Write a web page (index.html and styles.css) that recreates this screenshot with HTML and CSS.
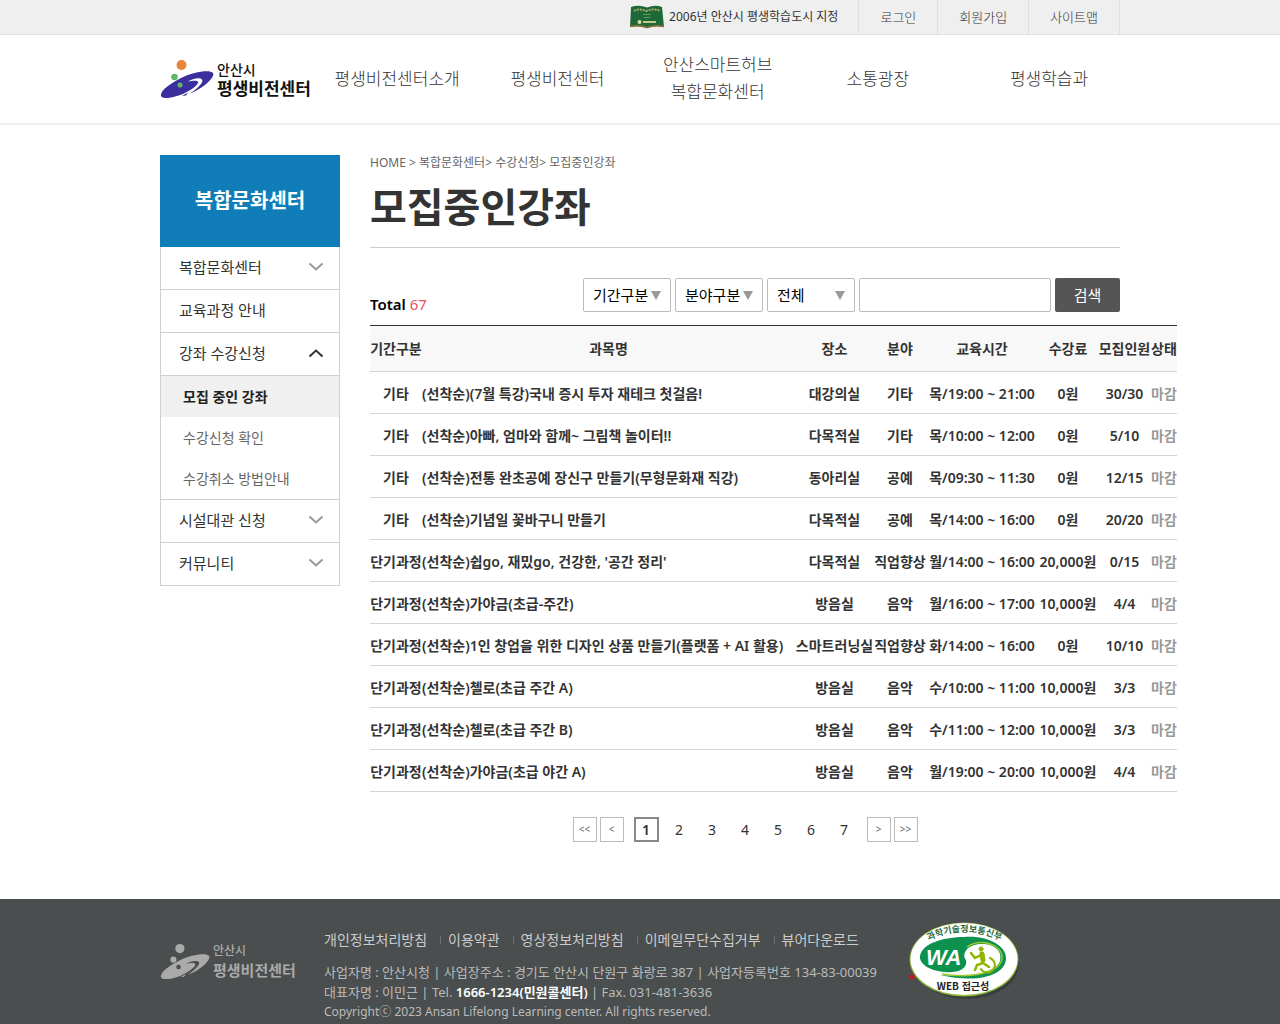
FILE: index.html
```html
<!DOCTYPE html>
<html lang="ko">
<head>
<meta charset="utf-8">
<meta name="viewport" content="width=device-width, initial-scale=1">
<title>모집중인강좌 - 안산시 평생비전센터</title>
<link rel="stylesheet" href="styles.css">
</head>
<body>
<svg width="0" height="0" class="defs" aria-hidden="true">
  <symbol id="mark" viewBox="0 0 54 40">
    <circle class="sun" cx="21.500" cy="6" r="5"/>
    <circle class="leaf" cx="14.500" cy="18" r="3.300"/>
    <path class="wing" d="M1 37C0 32 9 25 21 19 34 12.500 50 10.500 53 14 55.500 18 44 29 30 34.500 38 29 44 23 42 20.500 39.500 18 32 20 28 22.500 35 21 39 21.500 38 24 36 28 29 32 23 35 14 38.500 3 41 1 37Z"/>
    <path class="wing" d="M22 37 28 33.500 26 36.500Z"/>
    <circle class="seed" cx="20" cy="26" r="2.500"/>
  </symbol>
  <symbol id="down" viewBox="0 0 16 10"><path d="M1.500 1.500 8 7.500 14.500 1.500" fill="none" stroke="currentColor" stroke-width="2"/></symbol>
</svg>

<div class="topbar">
  <div class="wrap topbar-in">
    <p class="city">
      <svg width="36" height="24" viewBox="0 0 36 24" aria-hidden="true">
        <path d="M2 2Q10-.5 18 2.500 26-.5 33 2L35 22Q26 20 18 23 10 20 1 22Z" fill="#1d6a38"/>
        <path d="M1 21.500Q10 19.500 18 22.500 26 19.500 35 21.500" fill="none" stroke="#8d6d38" stroke-width="1.500"/>
        <path d="M5 6Q10 3 17 6 25 3 31 6" fill="none" stroke="#b5a765" stroke-width="2" stroke-dasharray="2 1"/>
        <path d="M14 9.500h8M15 12.500h6" stroke="#5d9b54"/>
        <circle cx="10.500" cy="17" r="2" fill="#e8d6a0"/><path d="M14 17h13" stroke="#c8c890" stroke-width="2"/>
      </svg>
      2006년 안산시 평생학습도시 지정
    </p>
    <ul class="util">
      <li><a href="#">로그인</a></li>
      <li><a href="#">회원가입</a></li>
      <li><a href="#">사이트맵</a></li>
    </ul>
  </div>
</div>

<header class="header">
  <div class="wrap header-in">
    <a class="logo" href="#">
      <svg width="54" height="40" aria-hidden="true"><use href="#mark"/></svg>
      <span class="logo-text"><span>안산시</span><strong>평생비전센터</strong></span>
    </a>
    <nav class="gnb">
      <a href="#">평생비전센터소개</a>
      <a href="#">평생비전센터</a>
      <a href="#">안산스마트허브<br>복합문화센터</a>
      <a href="#">소통광장</a>
      <a href="#">평생학습과</a>
    </nav>
  </div>
</header>

<div class="wrap page">
  <aside class="side">
    <h2>복합문화센터</h2>
    <ul class="lnb">
      <li><a href="#">복합문화센터<svg class="chev" width="16" height="10"><use href="#down"/></svg></a></li>
      <li><a href="#">교육과정 안내</a></li>
      <li><a href="#">강좌 수강신청<svg class="chev open" width="16" height="10"><use href="#down"/></svg></a></li>
      <li>
        <ul class="sub">
          <li><a class="on" href="#">모집 중인 강좌</a></li>
          <li><a href="#">수강신청 확인</a></li>
          <li><a href="#">수강취소 방법안내</a></li>
        </ul>
      </li>
      <li><a href="#">시설대관 신청<svg class="chev" width="16" height="10"><use href="#down"/></svg></a></li>
      <li><a href="#">커뮤니티<svg class="chev" width="16" height="10"><use href="#down"/></svg></a></li>
    </ul>
  </aside>

  <main class="main">
    <p class="crumb">HOME &gt; 복합문화센터&gt; 수강신청&gt; 모집중인강좌</p>
    <h1>모집중인강좌</h1>

    <div class="tools">
      <p class="total">Total <span>67</span></p>
      <form class="search">
        <span class="pick"><select aria-label="기간구분"><option>기간구분</option></select></span>
        <span class="pick"><select aria-label="분야구분"><option>분야구분</option></select></span>
        <span class="pick"><select aria-label="검색조건"><option>전체</option></select></span>
        <input type="text" aria-label="검색어">
        <button type="button">검색</button>
      </form>
    </div>

    <table class="list">
      <colgroup><col class="c-term"><col class="c-name"><col class="c-room"><col class="c-kind"><col class="c-time"><col class="c-fee"><col class="c-seat"><col class="c-state"></colgroup>
      <thead>
        <tr><th>기간구분</th><th>과목명</th><th>장소</th><th>분야</th><th>교육시간</th><th>수강료</th><th>모집인원</th><th>상태</th></tr>
      </thead>
      <tbody>
        <tr><td>기타</td><td><a href="#">(선착순)(7월 특강)국내 증시 투자 재테크 첫걸음!</a></td><td>대강의실</td><td>기타</td><td>목/19:00 ~ 21:00</td><td>0원</td><td>30/30</td><td>마감</td></tr>
        <tr><td>기타</td><td><a href="#">(선착순)아빠, 엄마와 함께~ 그림책 놀이터!!</a></td><td>다목적실</td><td>기타</td><td>목/10:00 ~ 12:00</td><td>0원</td><td>5/10</td><td>마감</td></tr>
        <tr><td>기타</td><td><a href="#">(선착순)전통 완초공예 장신구 만들기(무형문화재 직강)</a></td><td>동아리실</td><td>공예</td><td>목/09:30 ~ 11:30</td><td>0원</td><td>12/15</td><td>마감</td></tr>
        <tr><td>기타</td><td><a href="#">(선착순)기념일 꽃바구니 만들기</a></td><td>다목적실</td><td>공예</td><td>목/14:00 ~ 16:00</td><td>0원</td><td>20/20</td><td>마감</td></tr>
        <tr><td>단기과정</td><td><a href="#">(선착순)쉽go, 재밌go, 건강한, '공간 정리'</a></td><td>다목적실</td><td>직업향상</td><td>월/14:00 ~ 16:00</td><td>20,000원</td><td>0/15</td><td>마감</td></tr>
        <tr><td>단기과정</td><td><a href="#">(선착순)가야금(초급-주간)</a></td><td>방음실</td><td>음악</td><td>월/16:00 ~ 17:00</td><td>10,000원</td><td>4/4</td><td>마감</td></tr>
        <tr><td>단기과정</td><td><a href="#">(선착순)1인 창업을 위한 디자인 상품 만들기(플랫폼 + AI 활용)</a></td><td>스마트러닝실</td><td>직업향상</td><td>화/14:00 ~ 16:00</td><td>0원</td><td>10/10</td><td>마감</td></tr>
        <tr><td>단기과정</td><td><a href="#">(선착순)첼로(초급 주간 A)</a></td><td>방음실</td><td>음악</td><td>수/10:00 ~ 11:00</td><td>10,000원</td><td>3/3</td><td>마감</td></tr>
        <tr><td>단기과정</td><td><a href="#">(선착순)첼로(초급 주간 B)</a></td><td>방음실</td><td>음악</td><td>수/11:00 ~ 12:00</td><td>10,000원</td><td>3/3</td><td>마감</td></tr>
        <tr><td>단기과정</td><td><a href="#">(선착순)가야금(초급 야간 A)</a></td><td>방음실</td><td>음악</td><td>월/19:00 ~ 20:00</td><td>10,000원</td><td>4/4</td><td>마감</td></tr>
      </tbody>
    </table>

    <nav class="paging" aria-label="페이지">
      <div class="jump"><a href="#">&lt;&lt;</a><a href="#">&lt;</a></div>
      <div class="nums"><a class="on" href="#">1</a><a href="#">2</a><a href="#">3</a><a href="#">4</a><a href="#">5</a><a href="#">6</a><a href="#">7</a></div>
      <div class="jump"><a href="#">&gt;</a><a href="#">&gt;&gt;</a></div>
    </nav>
  </main>
</div>

<footer class="footer">
  <div class="wrap footer-in">
    <div class="logo logo-gray">
      <svg width="50" height="37" aria-hidden="true"><use href="#mark"/></svg>
      <span class="logo-text"><span>안산시</span><strong>평생비전센터</strong></span>
    </div>
    <div class="info">
      <ul class="policy">
        <li><a href="#">개인정보처리방침</a></li>
        <li><a href="#">이용약관</a></li>
        <li><a href="#">영상정보처리방침</a></li>
        <li><a href="#">이메일무단수집거부</a></li>
        <li><a href="#">뷰어다운로드</a></li>
      </ul>
      <address>
        사업자명 : 안산시청 | 사업장주소 : 경기도 안산시 단원구 화랑로 387 | 사업자등록번호 134-83-00039<br>
        대표자명 : 이민근 | Tel. <strong>1666-1234(민원콜센터)</strong> | Fax. 031-481-3636
      </address>
      <p class="copy">Copyrightⓒ 2023 Ansan Lifelong Learning center. All rights reserved.</p>
    </div>
    <svg class="wa" width="120" height="84" viewBox="0 0 120 84" role="img" aria-label="웹 접근성 인증마크">
      <defs><path id="arc" d="M14 22Q56-2 99 22"/></defs>
      <ellipse cx="59" cy="42" rx="52" ry="35" fill="#2d3132" opacity=".6"/>
      <ellipse cx="56" cy="37.500" rx="54.500" ry="37" fill="#8cb53c"/>
      <ellipse cx="56" cy="37" rx="53.500" ry="36" fill="#fff"/>
      <path d="M56 15C80 13 99 24 98 37 97 53 71 62 32 53 64 56 88 50 92 39 95 27 84 21 71 22 57 24 54 33 58 38 60 48 48 51 37 50 22 49 11 42 12 34 14 21 37 15 56 15Z" fill="#0c914f"/>
      <path d="M59 25C72 16 94 22 94 35 94 50 66 57 34 52" fill="none" stroke="#a1c829" stroke-width="1.500"/>
      <text x="18" y="43" class="wa-big">WA</text>
      <g fill="none" stroke="#8db600" stroke-linecap="round"><circle cx="73" cy="27" r="2" fill="#8db600"/><path d="M74 32 75 38" stroke-width="5"/><path d="M73 33 67 36 63 31M75 41 69 43 67 48M75 41 81 45" stroke-width="2.500"/><path d="M82 36A7.500 7.500 0 1 1 73 47" stroke-width="2"/></g>
      <text class="wa-arc"><textPath href="#arc" startOffset="50%">과학기술정보통신부</textPath></text>
      <text x="55" y="68" class="wa-web">WEB 접근성</text>
      <circle cx="4" cy="55" r="2.500" fill="#c8141e"/>
    </svg>
  </div>
</footer>
</body>
</html>
```
FILE: styles.css
```css
* { box-sizing: border-box; margin: 0; padding: 0; }
body {
  display: flex;
  flex-direction: column;
  min-height: 100vh;
  background: #fff;
  color: #333;
  font: 14px/20px "Noto Sans", "Noto Sans CJK KR", sans-serif;
}
a { color: inherit; text-decoration: none; }
ul { list-style: none; }
.defs { position: absolute; }
.wrap { width: 100%; max-width: 960px; margin: 0 auto; }

.topbar { background: #efefef; border-bottom: 1px solid #e0e0e0; }
.topbar-in { display: flex; justify-content: flex-end; height: 34px; }
.city { display: flex; align-items: center; gap: 4px; padding-right: 20px; font-size: 12px; }
.util { display: flex; font-size: 13px; font-weight: 300; line-height: 34px; }
.util li { padding: 0 21px; border-left: 1px solid #dedede; }
.util li:last-child { border-right: 1px solid #dedede; }

.header { border-bottom: 2px solid #eee; }
.header-in { display: flex; align-items: center; height: 88px; }
.logo { display: flex; align-items: center; gap: 3px; flex: 0 0 157px; color: #111; }
.logo-text { display: flex; flex-direction: column; padding-top: 2px; font-size: 14px; font-weight: 500; line-height: 18px; white-space: nowrap; }
.logo-text strong { font-size: 17px; line-height: 20px; }
.sun { fill: var(--tone, #e8853a); }
.leaf { fill: var(--tone, #5fb968); }
.wing { fill: var(--tone, #3a2f9c); }
.seed { fill: var(--seed, #5fb968); }
.gnb {
  flex: 1;
  display: grid;
  grid-template-columns: repeat(4, 1fr) 182px;
  align-items: center;
  margin-right: -20px;
  padding-bottom: 2px;
  text-align: center;
  font-size: 17px;
  font-weight: 300;
  line-height: 27px;
}

.page { display: flex; align-items: flex-start; gap: 30px; padding: 30px 0 57px; }
.side { flex: 0 0 180px; }
.side h2 { background: #117db8; color: #fff; font-size: 20px; line-height: 92px; text-align: center; }
.lnb { border: 1px solid #d0d0d0; border-top: 0; font-size: 15px; }
.lnb > li + li { border-top: 1px solid #d0d0d0; }
.lnb > li > a { display: flex; align-items: center; justify-content: space-between; height: 42px; padding: 0 15px 2px 18px; }
.chev { color: #999; }
.chev.open { color: #333; transform: rotate(180deg); }
.sub { font-size: 14px; line-height: 41px; color: #666; }
.sub a { display: block; padding-left: 22px; }
.sub .on { background: #f0f0f0; color: #222; font-weight: 700; }

.main { flex: 1; min-width: 0; }
.crumb { font-size: 12px; line-height: 16px; color: #666; }
h1 { padding: 6px 0 10px; border-bottom: 1px solid #ccc; font-size: 40px; font-weight: 600; line-height: 60px; }
.tools { display: flex; justify-content: space-between; align-items: flex-end; padding: 30px 0 13px; }
.total { font-size: 15px; line-height: 16px; font-weight: 600; color: #000; }
.total span { color: #e8505f; font-weight: 400; }
.search { display: flex; gap: 4px; }
.search select, .search input, .search button { height: 34px; border: 1px solid #bbb; border-radius: 2px; background: #fff; color: #000; font: 15px/20px "Noto Sans", "Noto Sans CJK KR", sans-serif; }
.pick { position: relative; width: 88px; }
.search select { width: 100%; padding-left: 9px; appearance: none; }
.pick::after { content: ""; position: absolute; right: 10px; top: 13px; border: 5px solid transparent; border-top: 9px solid #999; border-bottom: 0; pointer-events: none; }
.search input { width: 192px; padding: 0 8px; }
.search button { width: 65px; border: 0; background: #555; color: #fff; }

.list { border-collapse: collapse; width: 100%; min-width: 807px; border-top: 1px solid #333; font-weight: 600; white-space: nowrap; }
.list th { height: 46px; background: #f8f8f8; font-weight: 600; }
.list td { height: 42px; padding-top: 2px; text-align: center; }
.list tr { border-bottom: 1px solid #d5d5d5; }
.list td:nth-child(2) { text-align: left; }
.list td:last-child { color: #999; }
.c-term, .c-kind { width: 52px; }
.c-name { width: 373px; }
.c-room { width: 79px; }
.c-time { width: 112px; }
.c-fee { width: 60px; }
.c-seat { width: 53px; }
.c-state { width: 26px; }

.paging { display: flex; justify-content: center; gap: 10px; padding-top: 25px; }
.jump { display: flex; gap: 3px; }
.nums { display: flex; gap: 8px; }
.paging a { width: 24px; height: 25px; text-align: center; line-height: 25px; }
.nums a { width: 25px; }
.jump a { border: 1px solid #bbb; font-size: 10px; line-height: 22px; color: #666; }
.nums .on { border: 2px solid #888; line-height: 21px; font-weight: 600; }

.footer { flex: 1; background: #4a4e4f; color: #bbb; }
.footer-in { display: flex; align-items: flex-start; padding-top: 23px; }
.logo-gray { --tone: #aaa; --seed: #4a4e4f; flex-basis: 164px; padding-top: 20px; color: #aaa; }
.logo-gray .logo-text { padding-top: 0; font-size: 12px; line-height: 18px; }
.logo-gray strong { font-size: 15px; line-height: 20px; }
.info { flex: 0 0 584px; padding-top: 8px; white-space: nowrap; }
.policy { display: flex; line-height: 20px; color: #ccc; }
.policy li + li { margin-left: 13px; padding-left: 8px; background: linear-gradient(#6c7071, #6c7071) left center / 1px 8px no-repeat; }
address { padding-top: 12px; font-size: 13px; font-style: normal; line-height: 20px; }
address strong { color: #fff; font-weight: 600; }
.copy { font-size: 12px; line-height: 20px; }
.wa-big { font: italic 700 22px "Liberation Sans", sans-serif; fill: #fff; }
.wa-arc { font: 700 9px "Noto Sans CJK KR", sans-serif; fill: #286b42; text-anchor: middle; }
.wa-web { font: 700 10px "Noto Sans CJK KR", sans-serif; fill: #222; text-anchor: middle; }
```
